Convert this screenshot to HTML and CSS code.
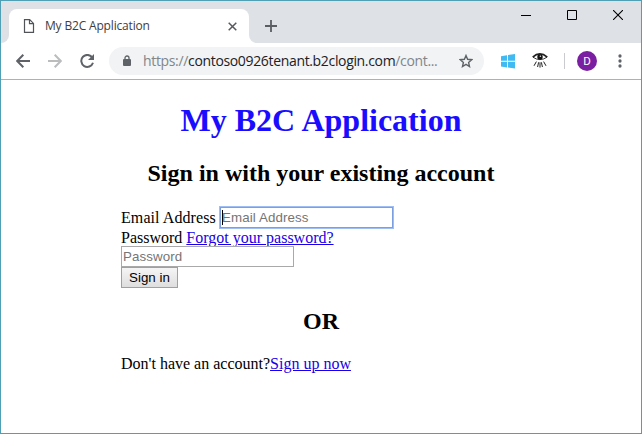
FILE: index.html
```html
<!DOCTYPE html>
<html lang="en">
<head>
<meta charset="utf-8">
<title>My B2C Application</title>
<link rel="stylesheet" href="styles.css">
</head>
<body>
<div class="window">
  <header class="tabstrip">
    <div class="tab-lead"><i></i></div>
    <div class="tab">
      <svg class="page-icon" width="12" height="14" viewBox="0 0 12 14" fill="none" stroke="#505357" stroke-width="1.2"><path d="M1.5 .6h5.2l3.8 3.8v9H1.5zM6.5 .6v4.1h4"/></svg>
      <span class="tab-title">My B2C Application</span>
      <svg class="tab-close" width="9" height="9" viewBox="0 0 9 9" stroke="#55585c" stroke-width="1.5"><path d="M.7 .7l7.6 7.6M8.3 .7L.7 8.3"/></svg>
    </div>
    <div class="tab-tail"><i></i></div>
    <svg class="new-tab" width="12" height="12" viewBox="0 0 12 12" stroke="#5a5d61" stroke-width="1.8"><path d="M6 0v12M0 6h12"/></svg>
    <div class="controls">
      <svg width="10" height="10" viewBox="0 0 10 10"><path d="M0 5h10v1H0z"/></svg>
      <svg width="10" height="10" viewBox="0 0 10 10" fill="none" stroke="#000"><path d="M.5 .5h9v9h-9z"/></svg>
      <svg width="10" height="10" viewBox="0 0 10 10" stroke="#000" stroke-width="1.1"><path d="M0 0l10 10M10 0L0 10"/></svg>
    </div>
  </header>
  <nav class="toolbar">
    <svg class="back" width="14" height="14" viewBox="0 0 14 14" fill="none" stroke="#5f6368" stroke-width="2"><path d="M14 7H1.5M7.3 .8L1.2 7l6.1 6.2"/></svg>
    <svg class="forward" width="14" height="14" viewBox="0 0 14 14" fill="none" stroke="#babcbe" stroke-width="2"><path d="M0 7h12.5M6.7 .8L12.8 7l-6.1 6.2"/></svg>
    <svg class="reload" width="15" height="14" viewBox="0 0 15 14"><path d="M12.3 3.6A6 6 0 1 0 13 8.8" fill="none" stroke="#5f6368" stroke-width="2"/><path d="M14 0v6H8z" fill="#5f6368"/></svg>
    <div class="omnibox">
      <svg class="lock" width="8" height="12" viewBox="0 0 8 12"><path d="M2 5V3a2 2 0 0 1 4 0v2" fill="none" stroke="#5f6368" stroke-width="1.3"/><rect y="4" width="8" height="7" rx="1" fill="#5f6368"/></svg>
      <span class="url">https://<b>contoso0926tenant.b2clogin.com</b>/cont...</span>
      <svg class="star" width="14" height="14" viewBox="0 0 14 14" fill="none" stroke="#5f6368" stroke-width="1.4"><path d="M7 1.5l1.6 3.8 4.1.4-3.1 2.7.9 4.1L7 10.3l-3.5 2.2.9-4.1-3.1-2.7 4.1-.4z"/></svg>
    </div>
    <svg class="win" width="14" height="15" viewBox="0 0 14 15" fill="#40baf2"><path d="M0 2.2l6-.9v5.5H0zM7 1.1l7-1v6.7H7zM0 7.8h6v5.6l-6-.8zM7 7.8h7v6.7l-7-1z"/></svg>
    <svg class="eye" width="16" height="16" viewBox="0 0 16 16" fill="none" stroke="#222"><path d="M.7 4.2Q7.8-2.3 15.3 4.2" stroke-width="1.6"/><path d="M1 4.2Q7.8 9 15 4.2" stroke-width=".9"/><circle cx="8" cy="4" r="2.7" fill="#111" stroke="none"/><circle cx="8.4" cy="3.2" r=".8" fill="#ddd" stroke="none"/><path d="M4.4 8.6l-2.4 4.2M6.6 9.3l-1 4.7M8 9.3V14.6M9.4 9.3l1 4.7M11.6 8.6l2.4 4.2" stroke-width="1"/></svg>
    <div class="divider"></div>
    <div class="avatar">D</div>
    <svg class="menu" width="4" height="14" viewBox="0 0 4 14" fill="#5f6368"><circle cx="2" cy="2" r="1.65"/><circle cx="2" cy="7" r="1.65"/><circle cx="2" cy="12" r="1.65"/></svg>
  </nav>
  <main>
    <h1>My B2C Application</h1>
    <h2>Sign in with your existing account</h2>
    <form class="content">
      <div class="row"><label for="email">Email Address</label><div class="field focused" id="email"><i class="caret"></i>Email Address</div></div>
      <div class="row password"><span>Password</span><a>Forgot your password?</a></div>
      <div class="field">Password</div>
      <div class="button">Sign in</div>
    </form>
    <h2 class="or">OR</h2>
    <p class="content">Don't have an account?<a>Sign up now</a></p>
  </main>
</div>
</body>
</html>
```
FILE: styles.css
```css
* { box-sizing: border-box; }
body { margin: 0; background: #fff; }
svg { display: block; flex: none; }
.window { width: 642px; height: 434px; border: 1px solid #4f9fb5; overflow: hidden; font: 16px/20px "Liberation Serif", serif; color: #000; }

.tabstrip { height: 42px; background: #dee1e6; display: flex; padding-top: 8px; }
.tab-lead, .tab-tail { width: 8px; height: 34px; background: #fff; flex: none; }
.tab-lead i, .tab-tail i { display: block; height: 34px; background: #dee1e6; }
.tab-lead i { border-bottom-right-radius: 8px; }
.tab-tail i { border-bottom-left-radius: 8px; }
.tab { width: 240px; height: 34px; background: #fff; border-radius: 8px 8px 0 0; display: flex; align-items: center; padding-left: 14px; }
.tab-title { width: 175px; margin-left: 10px; font: 12px/16px "Open Sans", sans-serif; letter-spacing: -.17px; color: #3c4043; white-space: nowrap; }
.tab-close { margin-left: 8px; }
.new-tab { margin: 11px 0 0 8px; }
.controls { display: flex; gap: 36px; margin: 1px 18px 0 auto; }

.toolbar { height: 37px; border-bottom: 1px solid #b0b0b0; background: #fff; display: flex; align-items: center; padding-left: 15px; }
.forward { margin-left: 18px; }
.reload { margin-left: 18px; }
.omnibox { width: 375px; height: 28px; margin-left: 14px; border-radius: 14px; background: #f1f3f4; display: flex; align-items: center; padding: 0 11px 0 14px; }
.url { margin-left: 12px; font: 14px/20px "Open Sans", sans-serif; letter-spacing: -.34px; color: #80868b; white-space: nowrap; }
.url b { font-weight: 400; color: #202124; }
.star { margin-left: auto; }
.win { margin-left: 17px; }
.eye { margin-left: 17px; }
.divider { width: 1px; height: 16px; margin-left: 16px; background: #c9cbce; }
.avatar { width: 20px; height: 20px; margin-left: 12px; border-radius: 50%; background: #7b1fa2; color: #fff; font: 11.5px/21px Roboto, sans-serif; text-align: center; }
.menu { margin-left: 21px; }

h1, h2 { margin: 0; text-align: center; }
h1 { margin-top: 22px; font-size: 32px; line-height: 37px; color: #1a0dff; }
h2 { margin-top: 21px; font-size: 24px; line-height: 27px; }
.content { width: 400px; margin: 20px auto 0; }
.row { display: flex; height: 21px; gap: 4px; }
.row label { width: 95px; line-height: 21px; letter-spacing: .08px; white-space: nowrap; }
.password { height: 18px; line-height: 19px; }
a { color: #1a00e8; text-decoration: underline; }
.field { position: relative; width: 173px; height: 21px; border: 1px solid #a9a9a9; padding-left: 1px; font: 13.333px/19px "Liberation Sans", sans-serif; letter-spacing: .1px; color: #757575; white-space: nowrap; }
.focused { border-color: #7b9fe0; box-shadow: 0 0 0 1px #9fbef5; }
.caret { position: absolute; left: 1px; top: 2px; width: 1px; height: 15px; background: #000; }
.button { width: 57px; height: 21px; border: 1px solid #a0a0a0; background: linear-gradient(#f5f5f5, #dedede); font: 13.333px/19px "Liberation Sans", sans-serif; text-align: center; }
.or { margin-top: 20px; }
p.content { margin-top: 19px; }
```
